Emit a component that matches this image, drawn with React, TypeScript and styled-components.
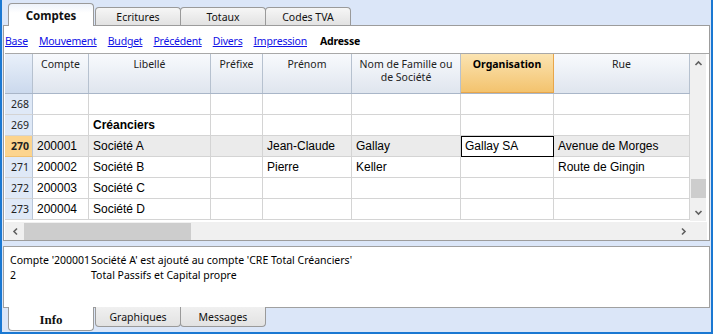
import React from 'react';
import styled, { createGlobalStyle, css } from 'styled-components';

const GlobalStyle = createGlobalStyle`
  * { box-sizing: border-box; }
  body {
    margin: 0;
    font-family: "Noto Sans", "DejaVu Sans", sans-serif;
  }
`;

const UI_FONT = `"Noto Sans", "DejaVu Sans", sans-serif`;
const CELL_FONT = `"Liberation Sans", Arial, sans-serif`;

const Window = styled.div`
  width: 713px;
  height: 334px;
  background: #dbe6f8;
  border: 2px solid #1a78d2;
  border-top: none;
  display: flex;
  flex-direction: column;
  overflow: hidden;
`;

const TopTabs = styled.div`
  height: 25px;
  display: flex;
  align-items: flex-end;
  padding-left: 6px;
`;

const TopTab = styled.div<{ $active?: boolean }>`
  width: 86px;
  margin-left: -1px;
  height: 18px;
  border: 1px solid #9a9a9a;
  border-bottom: none;
  border-radius: 4px 4px 0 0;
  background: linear-gradient(#f6f6f6, #e2e2e2);
  font: 10.5px ${UI_FONT};
  color: #111;
  display: flex;
  align-items: center;
  justify-content: center;
  padding-top: 1px;
  ${p =>
    p.$active &&
    css`
      margin-left: 0;
      margin-right: 2px;
      margin-bottom: -1px;
      height: 23px;
      background: linear-gradient(#eef3fb, #ffffff 40%);
      font-weight: bold;
      font-size: 11.5px;
      position: relative;
      z-index: 1;
    `}
`;

const Panel = styled.div`
  margin: 0 1px;
  height: 216px;
  background: #fff;
  border: 1px solid #9c9c9c;
  display: flex;
  flex-direction: column;
`;

const LinkBar = styled.div`
  height: 27px;
  display: flex;
  align-items: center;
  gap: 11px;
  padding: 3px 0 0 1px;
  font: 10.5px ${UI_FONT};
  letter-spacing: -0.2px;
`;

const NavLink = styled.a<{ $current?: boolean }>`
  color: #1010e6;
  text-decoration: underline;
  cursor: pointer;
  ${p =>
    p.$current &&
    css`
      color: #000;
      font-weight: bold;
      text-decoration: none;
      margin-left: 2px;
    `}
`;

const GridBody = styled.div`
  margin-left: 1px;
  height: 168px;
  display: flex;
  border-top: 1px solid #a8a8a8;
`;

const cols = '28px 56px 122px 52px 89px 109px 93px 136px';

const Table = styled.div`
  width: 685px;
  display: flex;
  flex-direction: column;
`;

const HeaderRow = styled.div`
  display: grid;
  grid-template-columns: ${cols};
  height: 40px;
  border-bottom: 1px solid #a9b6c8;
`;

const HeadCell = styled.div<{ $active?: boolean; $corner?: boolean }>`
  background: linear-gradient(#f8fafd, #dfe5ee);
  border-right: 1px solid #b6c1cf;
  font: 10.5px ${UI_FONT};
  line-height: 13px;
  color: #222;
  text-align: center;
  padding-top: 4px;
  ${p =>
    p.$active &&
    css`
      background: linear-gradient(#fbe4b2, #f3c26c);
      border-right: 1px solid #e8a64a;
      box-shadow: inset 0 -1px 0 #e8a64a;
      font-weight: bold;
      color: #000;
    `}
  ${p =>
    p.$corner &&
    css`
      background: linear-gradient(#e9f0fa, #cbd9ed);
    `}
`;

const Row = styled.div<{ $selected?: boolean }>`
  display: grid;
  grid-template-columns: ${cols};
  height: 21px;
  background: ${p => (p.$selected ? '#ebebeb' : '#fff')};
`;

const Cell = styled.div<{ $bold?: boolean; $focus?: boolean }>`
  border-right: 1px solid #d4d4d4;
  border-bottom: 1px solid #d4d4d4;
  font: ${p => (p.$bold ? 'bold ' : '')}12px ${CELL_FONT};
  color: #000;
  padding: 0 4px;
  display: flex;
  align-items: center;
  white-space: nowrap;
  overflow: hidden;
  ${p =>
    p.$focus &&
    css`
      background: #fff;
      border-right-color: #000;
      border-bottom-color: #000;
      box-shadow: inset 1px 1px 0 #000;
    `}
`;

const RowNum = styled.div<{ $selected?: boolean }>`
  background: ${p => (p.$selected ? '#fcd48e' : '#dfe9f7')};
  border-right: 1px solid #b9c6d8;
  border-bottom: 1px solid ${p => (p.$selected ? '#f0c070' : '#d4d4d4')};
  font: ${p => (p.$selected ? 'bold ' : '')}10.5px ${UI_FONT};
  color: #222;
  display: flex;
  align-items: center;
  justify-content: flex-end;
  padding-right: 3px;
`;

const VScroll = styled.div`
  width: 16px;
  background: #f0f0f0;
  display: flex;
  flex-direction: column;
  align-items: center;
  padding: 5px 0 4px;
`;

const Thumb = styled.div<{ $vertical?: boolean }>`
  background: #cdcdcd;
  ${p =>
    p.$vertical
      ? css`
          width: 15px;
          height: 19px;
          margin-top: 111px;
        `
      : css`
          height: 17px;
          width: 167px;
          margin-left: 4px;
        `}
`;

const Spacer = styled.div`
  flex: 1;
`;

const HScroll = styled.div`
  margin: 1px 0 0 1px;
  height: 18px;
  display: flex;
  align-items: center;
  background: #f0f0f0;
  width: 702px;
  padding: 0 19px 0 6px;
`;

const InfoPanel = styled.div`
  margin: 5px 1px 0;
  height: 62px;
  background: #fff;
  border: 1px solid #a0a0a0;
  padding: 6px 0 0 6px;
  font: 10.5px ${UI_FONT};
  line-height: 15px;
  color: #000;
`;

const InfoLine = styled.div`
  display: grid;
  grid-template-columns: 81px auto;
  white-space: nowrap;
`;

const BottomTabs = styled.div`
  display: flex;
  align-items: flex-start;
  padding-left: 6px;
`;

const BottomTab = styled.div<{ $active?: boolean }>`
  width: 86px;
  height: 20px;
  margin-top: -1px;
  margin-left: -1px;
  border: 1px solid #9a9a9a;
  border-top: none;
  border-radius: 0 0 4px 4px;
  background: linear-gradient(#f0f0f0, #e2e2e2);
  font: 10.5px ${UI_FONT};
  color: #111;
  display: flex;
  align-items: center;
  justify-content: center;
  ${p =>
    p.$active &&
    css`
      margin-left: 0;
      margin-right: 2px;
      height: 24px;
      background: #fff;
      font: bold 13px "Liberation Serif", "Times New Roman", serif;
      padding-top: 3px;
      position: relative;
    `}
`;

const Chevron = ({ dir }: { dir: 'up' | 'down' | 'left' | 'right' }) => {
  const rot = { up: 0, right: 90, down: 180, left: 270 }[dir];
  return (
    <svg width="9" height="9" viewBox="0 0 9 9">
      <path
        d="M1.5 6 L4.5 3 L7.5 6"
        fill="none"
        stroke="#606060"
        strokeWidth="1.6"
        transform={`rotate(${rot} 4.5 4.5)`}
      />
    </svg>
  );
};

const headers = ['Compte', 'Libellé', 'Préfixe', 'Prénom', 'Nom de Famille ou de Société', 'Organisation', 'Rue'];

type RowData = {
  n: number;
  cells: string[];
  bold?: boolean;
  selected?: boolean;
};

const rows: RowData[] = [
  { n: 268, cells: ['', '', '', '', '', '', ''] },
  { n: 269, cells: ['', 'Créanciers', '', '', '', '', ''], bold: true },
  { n: 270, cells: ['200001', 'Société A', '', 'Jean-Claude', 'Gallay', 'Gallay SA', 'Avenue de Morges'], selected: true },
  { n: 271, cells: ['200002', 'Société B', '', 'Pierre', 'Keller', '', 'Route de Gingin'] },
  { n: 272, cells: ['200003', 'Société C', '', '', '', '', ''] },
  { n: 273, cells: ['200004', 'Société D', '', '', '', '', ''] },
];

const links = ['Base', 'Mouvement', 'Budget', 'Précédent', 'Divers', 'Impression'];

export default function App() {
  return (
    <>
      <GlobalStyle />
      <Window>
        <TopTabs>
          <TopTab $active>Comptes</TopTab>
          <TopTab>Ecritures</TopTab>
          <TopTab>Totaux</TopTab>
          <TopTab>Codes TVA</TopTab>
        </TopTabs>
        <Panel>
          <LinkBar>
            {links.map(l => (
              <NavLink key={l}>{l}</NavLink>
            ))}
            <NavLink $current>Adresse</NavLink>
          </LinkBar>
          <GridBody>
            <Table>
              <HeaderRow>
                <HeadCell $corner />
                {headers.map(h => (
                  <HeadCell key={h} $active={h === 'Organisation'}>
                    {h === 'Nom de Famille ou de Société' ? (
                      <>
                        Nom de Famille ou
                        <br />
                        de Société
                      </>
                    ) : (
                      h
                    )}
                  </HeadCell>
                ))}
              </HeaderRow>
              {rows.map(r => (
                <Row key={r.n} $selected={r.selected}>
                  <RowNum $selected={r.selected}>{r.n}</RowNum>
                  {r.cells.map((c, i) => (
                    <Cell key={i} $bold={r.bold} $focus={r.selected && i === 5}>
                      {c}
                    </Cell>
                  ))}
                </Row>
              ))}
            </Table>
            <VScroll>
              <Chevron dir="up" />
              <Thumb $vertical />
              <Spacer />
              <Chevron dir="down" />
            </VScroll>
          </GridBody>
          <HScroll>
            <Chevron dir="left" />
            <Thumb />
            <Spacer />
            <Chevron dir="right" />
          </HScroll>
        </Panel>
        <InfoPanel>
          <InfoLine>
            <span>Compte '200001</span>
            <span>Société A' est ajouté au compte 'CRE Total Créanciers'</span>
          </InfoLine>
          <InfoLine>
            <span>2</span>
            <span>Total Passifs et Capital propre</span>
          </InfoLine>
        </InfoPanel>
        <BottomTabs>
          <BottomTab $active>Info</BottomTab>
          <BottomTab>Graphiques</BottomTab>
          <BottomTab>Messages</BottomTab>
        </BottomTabs>
      </Window>
    </>
  );
}
